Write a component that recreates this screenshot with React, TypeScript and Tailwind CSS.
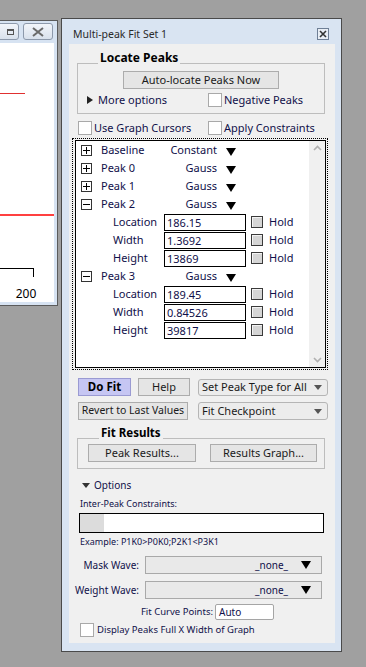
const ui = "font-['Noto_Sans',sans-serif]";

function WinCheck() {
  return <div className="w-[14px] h-[14px] shrink-0 border border-[#a9a9a9] bg-white" />;
}

function HoldCheck() {
  return (
    <div className="w-[12px] h-[12px] shrink-0 border border-[#3a3a3a] bg-[#d5d5d5] shadow-[inset_1px_1px_0_#f4f4f4]" />
  );
}

function DownTri({ size = "big" }: { size?: "big" | "small" }) {
  if (size === "small") {
    return <div className="w-0 h-0 border-l-[4px] border-r-[4px] border-t-[5px] border-l-transparent border-r-transparent border-t-[#555]" />;
  }
  return <div className="w-0 h-0 border-l-[5px] border-r-[5px] border-t-[8px] border-l-transparent border-r-transparent border-t-black" />;
}

function TreeBox({ open }: { open: boolean }) {
  return (
    <div className="relative w-[11px] h-[11px] shrink-0 border border-[#333] bg-white">
      <div className="absolute left-[1px] top-[4px] w-[7px] h-[1px] bg-black" />
      {!open && <div className="absolute left-[4px] top-[1px] w-[1px] h-[7px] bg-black" />}
    </div>
  );
}

function PeakRow({ name, type, open }: { name: string; type: string; open: boolean }) {
  return (
    <div className="flex items-center h-[18px] pl-[5px] text-[11px] text-[#10104a]">
      <TreeBox open={open} />
      <div className="ml-[9px] w-[59px]">{name}</div>
      <div className="w-[57px] text-right">{type}</div>
      <div className="ml-[9px] mt-[3px]">
        <DownTri />
      </div>
    </div>
  );
}

function ParamRow({ label, value }: { label: string; value: string }) {
  return (
    <div className="flex items-center h-[18px] pl-[37px] text-[11px] text-[#10104a]">
      <div className="w-[51px]">{label}</div>
      <div className="w-[82px] h-[17px] border border-black bg-white pl-[2px] leading-[15px]">{value}</div>
      <div className="ml-[5px]">
        <HoldCheck />
      </div>
      <div className="ml-[6px]">Hold</div>
    </div>
  );
}

function Btn({ children, className = "" }: { children: React.ReactNode; className?: string }) {
  return (
    <div
      className={
        "h-[18px] flex items-center justify-center border border-[#acacac] bg-[#e5e5e5] text-[#1a1a1a] shrink-0 " +
        className
      }
    >
      {children}
    </div>
  );
}

function Select({ label, className = "" }: { label: string; className?: string }) {
  return (
    <div
      className={
        "flex items-center justify-between rounded-[3px] border border-[#b5b5b5] bg-[#ececec] pl-[3px] pr-[5px] text-[11px] text-[#1a1a1a] shrink-0 " +
        className
      }
    >
      <span>{label}</span>
      <DownTri size="small" />
    </div>
  );
}

function WavePopup() {
  return (
    <div className="ml-[6px] w-[177px] h-[18px] flex items-center justify-end border border-[#a9a9a9] bg-[#e9e9e9] pr-[10px] text-[10px]">
      <span>_none_</span>
      <div className="ml-[13px]">
        <DownTri />
      </div>
    </div>
  );
}

function GraphWindow() {
  return (
    <div className="absolute left-[-12px] top-[20px] w-[70px] h-[286px] border border-[#5b5b5b] bg-[#d7e3f2] flex flex-col">
      <div className="h-[22px] flex items-start pt-[2px] pl-[4px] gap-[4px]">
        <div className="w-[26px] h-[17px] rounded-[3px] border border-[#8d99ab] bg-gradient-to-b from-[#f2f5fa] to-[#d9e1ec] flex items-center justify-end pr-[4px]">
          <div className="w-[7px] h-[6px] border border-[#555] border-t-2" />
        </div>
        <div className="w-[30px] h-[17px] rounded-[3px] border border-[#8d99ab] bg-gradient-to-b from-[#f2f5fa] to-[#d9e1ec] flex items-center justify-center">
          <svg width="12" height="10" viewBox="0 0 12 10">
            <path d="M1 1 L11 9 M11 1 L1 9" stroke="#6a6a6a" strokeWidth="2" fill="none" />
          </svg>
        </div>
      </div>
      <div className="ml-[9px] w-[56px] flex-1 mb-[3px] bg-white">
        <svg width="56" height="259" viewBox="0 0 56 259" className={ui}>
          <line x1="0" y1="50.5" x2="27" y2="50.5" stroke="#e03030" strokeWidth="1" />
          <line x1="0" y1="172" x2="56" y2="172" stroke="#ff0000" strokeWidth="1.5" />
          <line x1="0" y1="225.5" x2="36" y2="225.5" stroke="#000" strokeWidth="1" />
          <line x1="35.5" y1="225" x2="35.5" y2="234" stroke="#000" strokeWidth="1" />
          <text x="28" y="255" textAnchor="middle" fontSize="12" fill="#000">200</text>
        </svg>
      </div>
    </div>
  );
}

function MultiPeakWindow() {
  return (
    <div className={"absolute left-[61px] top-[18px] w-[281px] h-[634px] border border-[#4a4a4a] bg-[#d9e4f2] flex flex-col " + ui}>
      {/* title bar */}
      <div className="h-[25px] flex items-center justify-between pl-[11px] pr-[12px] shrink-0">
        <span className="text-[10.5px] text-[#2a2a2a] mt-[6px]">Multi-peak Fit Set 1</span>
        <div className="mt-[5px] w-[12px] h-[12px] border border-[#6f7f96] bg-[#e9eef5] flex items-center justify-center">
          <svg width="8" height="8" viewBox="0 0 8 8">
            <path d="M1 1 L7 7 M7 1 L1 7" stroke="#333" strokeWidth="1.6" fill="none" />
          </svg>
        </div>
      </div>

      {/* panel */}
      <div className="ml-[7px] w-[266px] h-[599px] bg-[#f0f0f0] flex flex-col text-[11px] text-[#10104a]">
        {/* Locate Peaks */}
        <div className="relative mt-[19px] ml-[8px] w-[248px] h-[51px] border border-[#bdbdbd] shrink-0">
          <span className="absolute left-[20px] top-[-15px] px-[2px] bg-[#f0f0f0] font-bold text-[12px] text-black">
            Locate Peaks
          </span>
          <Btn className="mt-[7px] mx-auto w-[156px] text-[11px]">Auto-locate Peaks Now</Btn>
          <div className="mt-[4px] h-[14px] flex items-center">
            <div className="w-[130px] flex items-center pl-[9px]">
              <div className="w-0 h-0 border-t-[4px] border-b-[4px] border-l-[6px] border-t-transparent border-b-transparent border-l-[#222]" />
              <span className="ml-[5px]">More options</span>
            </div>
            <WinCheck />
            <span className="ml-[2px]">Negative Peaks</span>
          </div>
        </div>

        {/* checkbox row */}
        <div className="mt-[7px] ml-[9px] h-[14px] flex items-center shrink-0">
          <div className="w-[130px] flex items-center">
            <WinCheck />
            <span className="ml-[2px]">Use Graph Cursors</span>
          </div>
          <WinCheck />
          <span className="ml-[2px]">Apply Constraints</span>
        </div>

        {/* peak list */}
        <div className="mt-[3px] ml-[3px] w-[256px] h-[232px] border border-dotted border-black pl-[2px] pr-[1px] py-[1px] shrink-0">
          <div className="w-full h-full border border-black bg-white flex">
            <div className="flex-1 flex flex-col">
              <PeakRow name="Baseline" type="Constant" open={false} />
              <PeakRow name="Peak 0" type="Gauss" open={false} />
              <PeakRow name="Peak 1" type="Gauss" open={false} />
              <PeakRow name="Peak 2" type="Gauss" open={true} />
              <ParamRow label="Location" value="186.15" />
              <ParamRow label="Width" value="1.3692" />
              <ParamRow label="Height" value="13869" />
              <PeakRow name="Peak 3" type="Gauss" open={true} />
              <ParamRow label="Location" value="189.45" />
              <ParamRow label="Width" value="0.84526" />
              <ParamRow label="Height" value="39817" />
            </div>
            <div className="w-[16px] bg-[#f0f0f0] flex flex-col items-center justify-between py-[4px]">
              <svg width="9" height="6" viewBox="0 0 9 6">
                <path d="M1 5 L4.5 1.5 L8 5" stroke="#b0b0b0" strokeWidth="1.6" fill="none" />
              </svg>
              <svg width="9" height="6" viewBox="0 0 9 6">
                <path d="M1 1 L4.5 4.5 L8 1" stroke="#b0b0b0" strokeWidth="1.6" fill="none" />
              </svg>
            </div>
          </div>
        </div>

        {/* Do Fit row */}
        <div className="mt-[8px] ml-[9px] flex items-center shrink-0">
          <div className="w-[53px] h-[18px] flex items-center justify-center border border-[#9a9ad2] bg-[#c6c6f3] font-bold text-[11.5px] text-black shrink-0">
            Do Fit
          </div>
          <Btn className="ml-[7px] w-[52px] text-[11px]">Help</Btn>
          <Select label="Set Peak Type for All" className="ml-[8px] w-[130px] h-[17px]" />
        </div>
        <div className="mt-[6px] ml-[9px] flex items-center shrink-0">
          <Btn className="w-[110px] text-[10.5px]">Revert to Last Values</Btn>
          <Select label="Fit Checkpoint" className="ml-[10px] w-[130px] h-[18px]" />
        </div>

        {/* Fit Results */}
        <div className="relative mt-[18px] ml-[8px] w-[248px] h-[31px] border border-[#bdbdbd] flex items-start shrink-0">
          <span className="absolute left-[21px] top-[-15px] px-[2px] bg-[#f0f0f0] font-bold text-[11.5px] text-black">
            Fit Results
          </span>
          <Btn className="mt-[5px] ml-[10px] w-[108px] text-[11px]">Peak Results...</Btn>
          <Btn className="mt-[5px] ml-[14px] w-[107px] text-[11px]">Results Graph...</Btn>
        </div>

        {/* Options */}
        <div className="mt-[10px] ml-[13px] h-[12px] flex items-center text-[10px] shrink-0">
          <div className="w-0 h-0 border-l-[4px] border-r-[4px] border-t-[5px] border-l-transparent border-r-transparent border-t-[#333]" />
          <span className="ml-[4px]">Options</span>
        </div>
        <div className="mt-[7px] ml-[11px] h-[12px] flex items-center text-[9px] shrink-0">Inter-Peak Constraints:</div>
        <div className="mt-[3px] ml-[10px] w-[245px] h-[20px] border border-black bg-white flex shrink-0">
          <div className="w-[24px] h-full bg-[#dcdcdc]" />
        </div>
        <div className="mt-[3px] ml-[11px] h-[12px] flex items-center text-[9px] shrink-0">
          Example: P1K0&gt;P0K0;P2K1&lt;P3K1
        </div>

        <div className="mt-[8px] flex items-center text-[10px] shrink-0">
          <div className="w-[70px] text-right">Mask Wave:</div>
          <WavePopup />
        </div>
        <div className="mt-[7px] flex items-center text-[10px] shrink-0">
          <div className="w-[70px] text-right">Weight Wave:</div>
          <WavePopup />
        </div>
        <div className="mt-[5px] flex items-center text-[9.5px] shrink-0">
          <div className="w-[144px] text-right">Fit Curve Points:</div>
          <div className="ml-[2px] w-[59px] h-[16px] rounded-[2px] border border-[#a5a5a5] bg-white pl-[3px] leading-[14px] text-[10px]">Auto</div>
        </div>
        <div className="mt-[3px] ml-[11px] flex items-center text-[9.5px] shrink-0">
          <WinCheck />
          <span className="ml-[3px]">Display Peaks Full X Width of Graph</span>
        </div>
      </div>
    </div>
  );
}

export default function App() {
  return (
    <div className={"relative w-[366px] h-[667px] overflow-hidden bg-[#a0a0a0] " + ui}>
      <GraphWindow />
      <MultiPeakWindow />
    </div>
  );
}
